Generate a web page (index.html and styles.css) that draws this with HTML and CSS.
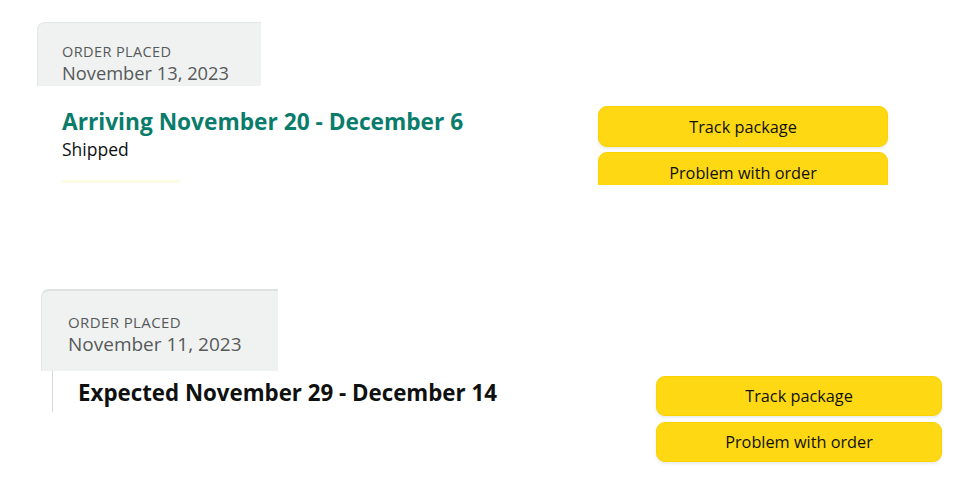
FILE: index.html
```html
<!DOCTYPE html>
<html lang="en">
<head>
  <meta charset="UTF-8" />
  <title>Your Orders</title>
  <meta name="viewport" content="width=device-width, initial-scale=1.0" />
  <link rel="stylesheet" href="styles.css">
</head>
<body>

  <!-- First order (cropped) -->
  <section class="order order-first">
    <div class="order-header">
      <div class="label">ORDER PLACED</div>
      <div class="date">November 13, 2023</div>
    </div>
    <div class="order-body">
      <div class="shipment">
        <h2 class="arriving">Arriving November 20 - December 6</h2>
        <div class="status">Shipped</div>
        <div class="thumb-strip"></div>
      </div>
      <div class="actions">
        <button class="btn">Track package</button>
        <button class="btn">Problem with order</button>
      </div>
    </div>
  </section>

  <!-- Second order -->
  <section class="order order-second">
    <div class="order-header">
      <div class="label">ORDER PLACED</div>
      <div class="date">November 11, 2023</div>
    </div>
    <div class="order-body">
      <div class="shipment">
        <h2 class="expected">Expected November 29 - December 14</h2>
      </div>
      <div class="actions">
        <button class="btn">Track package</button>
        <button class="btn">Problem with order</button>
      </div>
    </div>
  </section>

</body>
</html>
```

FILE: styles.css
```css
body {
  margin: 0;
  padding: 0;
  background: #fff;
  font-family: 'Open Sans', 'Noto Sans', sans-serif;
  color: #0f1111;
}

.order {
  overflow: hidden;
}

.order-header {
  background: #f0f2f2;
  border-top: 1px solid #e3e6e6;
  border-left: 1px solid #e3e6e6;
  border-top-left-radius: 8px;
  box-sizing: border-box;
}

.label {
  font-size: 14.5px;
  line-height: 19px;
  letter-spacing: 0.4px;
  color: #565959;
}

.date {
  font-size: 18.3px;
  line-height: 24px;
  color: #565959;
}

.order-body {
  display: flex;
  align-items: flex-start;
}

.shipment h2 {
  margin: 0;
  font-weight: 700;
}

.btn {
  display: block;
  box-sizing: border-box;
  background: #fed813;
  border: 1px solid #fcd200;
  border-radius: 9px;
  font-family: inherit;
  font-size: 16.3px;
  color: #0f1111;
  cursor: pointer;
  box-shadow: 0 2px 3px rgba(213, 217, 217, 0.5);
}

/* first order */
.order-first {
  height: 185px;
  padding-top: 22px;
  box-sizing: border-box;
  padding-left: 37px;
}

.order-first .order-header {
  width: 224px;
  height: 64px;
  padding: 19px 0 0 24px;
}

.order-first .order-body {
  padding-left: 25px;
}

.order-first .shipment {
  width: 536px;
  padding-top: 21px;
}

.arriving {
  font-size: 22.7px;
  line-height: 29px;
  color: #0a7c6c;
}

.status {
  font-size: 17.5px;
  line-height: 24px;
  margin-top: 1px;
}

.thumb-strip {
  margin-top: 19px;
  width: 118px;
  height: 3px;
  background: #fcfbe3;
}

.order-first .actions {
  padding-top: 20px;
  width: 290px;
}

.order-first .btn {
  width: 290px;
  height: 41px;
  margin-bottom: 5px;
}

/* second order */
.order-second {
  margin-top: 104px;
  padding-left: 41px;
}

.order-second .order-header {
  width: 237px;
  height: 82px;
  padding: 22px 0 0 26px;
  border-top: 2px solid #dfe2e2;
}

.order-second .label {
  font-size: 15px;
}

.order-second .date {
  font-size: 19px;
}

.order-second .order-body {
  margin-left: 11px;
}

.order-second .shipment {
  width: 604px;
  height: 41px;
  border-left: 1px solid #d5d9d9;
  padding: 8px 0 0 25px;
  box-sizing: border-box;
}

.expected {
  font-size: 22.3px;
  line-height: 27px;
  color: #0f1111;
}

.order-second .actions {
  padding-top: 5px;
  width: 286px;
}

.order-second .btn {
  width: 286px;
  height: 40px;
  margin-bottom: 6px;
}
```
